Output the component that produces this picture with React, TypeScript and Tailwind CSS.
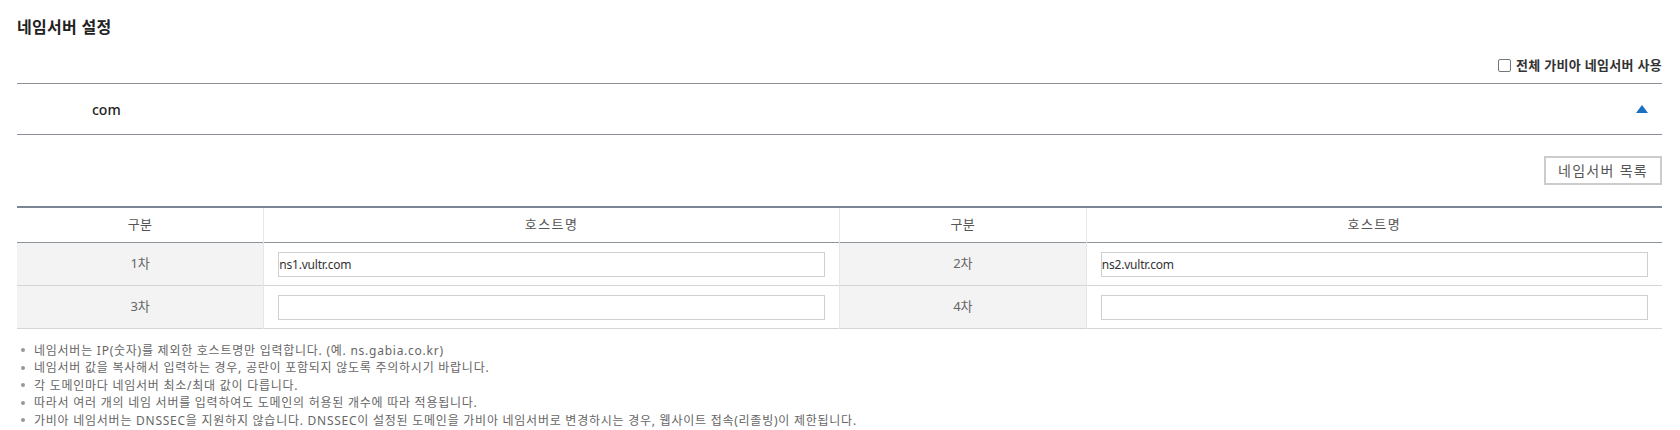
import { useState } from 'react';

const font = { fontFamily: '"Noto Sans", "Noto Sans CJK KR", sans-serif' };

const notes = [
  '네임서버는 IP(숫자)를 제외한 호스트명만 입력합니다. (예. ns.gabia.co.kr)',
  '네임서버 값을 복사해서 입력하는 경우, 공란이 포함되지 않도록 주의하시기 바랍니다.',
  '각 도메인마다 네임서버 최소/최대 값이 다릅니다.',
  '따라서 여러 개의 네임 서버를 입력하여도 도메인의 허용된 개수에 따라 적용됩니다.',
  '가비아 네임서버는 DNSSEC을 지원하지 않습니다. DNSSEC이 설정된 도메인을 가비아 네임서버로 변경하시는 경우, 웹사이트 접속(리졸빙)이 제한됩니다.',
];

function HostInput({ value }: { value: string }) {
  const [v, setV] = useState(value);
  return (
    <input
      value={v}
      onChange={(e) => setV(e.target.value)}
      className="h-[25px] w-full border border-[#cfcfcf] bg-white px-0 text-[12px] tracking-[-0.2px] text-[#333] outline-none"
      style={font}
    />
  );
}

export default function App() {
  const [allGabia, setAllGabia] = useState(false);
  const [open, setOpen] = useState(true);

  const rows = [
    [{ label: '1차', value: 'ns1.vultr.com' }, { label: '2차', value: 'ns2.vultr.com' }],
    [{ label: '3차', value: '' }, { label: '4차', value: '' }],
  ];

  return (
    <div className="min-h-screen w-full bg-white pl-[17px] pr-[18px]" style={font}>
      <h2 className="pt-[14px] text-[16px] leading-[26px] font-bold tracking-[0.3px] text-[#222]">네임서버 설정</h2>

      <div className="mt-[16px] flex justify-end">
        <label className="flex cursor-pointer items-center gap-[5px] text-[13px] leading-[18px] font-semibold tracking-[0.3px] text-[#333]">
          <input
            type="checkbox"
            checked={allGabia}
            onChange={() => setAllGabia(!allGabia)}
            className="h-[13px] w-[13px] appearance-none rounded-[2px] border border-[#767676] bg-white checked:bg-[#1a6fc0]"
          />
          전체 가비아 네임서버 사용
        </label>
      </div>

      <div className="mt-[9px] border-t border-b border-[#8c9198]">
        <button
          onClick={() => setOpen(!open)}
          className="flex h-[50px] w-full items-center justify-between pl-[75px] pr-[14px]"
        >
          <span className="text-[14px] font-medium text-[#222]">com</span>
          <svg width="12" height="8" viewBox="0 0 12 8" className={open ? '' : 'rotate-180'}>
            <polygon points="6,0 12,8 0,8" fill="#1a6fc0" />
          </svg>
        </button>
      </div>

      {open && (
        <>
          <div className="mt-[21px] flex justify-end">
            <button className="h-[29px] w-[118px] border-2 border-[#cccccc] bg-white text-[14px] tracking-[1.3px] text-[#555]">
              네임서버 목록
            </button>
          </div>

          <table className="mt-[21px] w-full table-fixed border-collapse border-t-2 border-[#7b8694]">
            <colgroup>
              <col className="w-[15%]" />
              <col className="w-[35%]" />
              <col className="w-[15%]" />
              <col className="w-[35%]" />
            </colgroup>
            <thead>
              <tr className="h-[35px] border-b border-[#8d949c]">
                <th className="border-r border-[#e6e6e6] text-[13px] font-normal tracking-[0.5px] text-[#555]">구분</th>
                <th className="border-r border-[#e6e6e6] text-[13px] font-normal tracking-[1.5px] text-[#555]">호스트명</th>
                <th className="border-r border-[#e6e6e6] text-[13px] font-normal tracking-[0.5px] text-[#555]">구분</th>
                <th className="text-[13px] font-normal tracking-[1.5px] text-[#555]">호스트명</th>
              </tr>
            </thead>
            <tbody>
              {rows.map((row, i) => (
                <tr key={i} className="h-[43px] border-b border-[#d5d5d5]">
                  {row.map((cell, j) => (
                    <>
                      <td
                        key={`l${j}`}
                        className="border-r border-[#e6e6e6] bg-[#f3f3f3] text-center text-[13px] text-[#666]"
                      >
                        {cell.label}
                      </td>
                      <td
                        key={`v${j}`}
                        className={`px-[14px] ${j === 0 ? 'border-r border-[#e6e6e6]' : ''}`}
                      >
                        <HostInput value={cell.value} />
                      </td>
                    </>
                  ))}
                </tr>
              ))}
            </tbody>
          </table>
        </>
      )}

      <ul className="mt-[13px] pl-[4px]">
        {notes.map((n, i) => (
          <li key={i} className="flex items-center gap-[9px] text-[12px] leading-[17.5px] tracking-[0.75px] text-[#666]">
            <span className="h-[4px] w-[4px] rounded-full bg-[#999]" />
            {n}
          </li>
        ))}
      </ul>
    </div>
  );
}
